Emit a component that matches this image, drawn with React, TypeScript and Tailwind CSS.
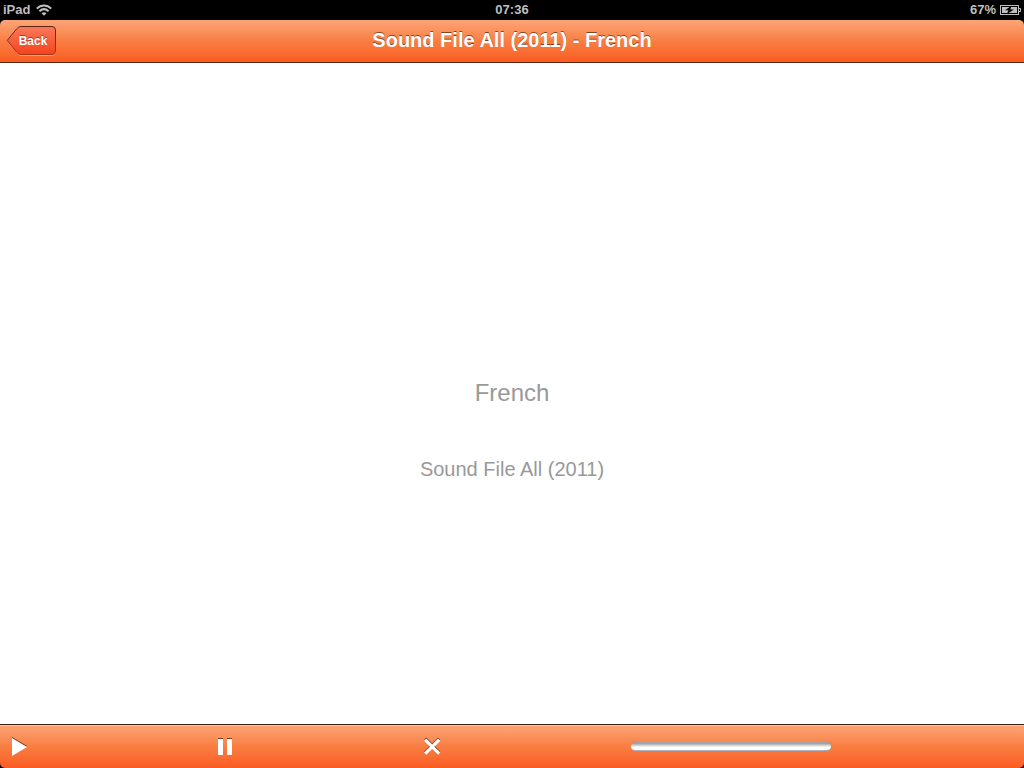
import type { ReactNode } from 'react';

const WifiIcon = () => (
  <svg width="16" height="12" viewBox="0 0 16 12" fill="none" stroke="#bfbfbf" aria-hidden="true">
    <path d="M0.8 4.6C5 0.4 11 0.4 15.2 4.6" strokeWidth="2" />
    <path d="M3.4 7.3C6.2 4.7 9.8 4.7 12.6 7.3" strokeWidth="2" />
    <path d="M8 11.8L5.5 9.2C7 8 9 8 10.5 9.2Z" fill="#bfbfbf" stroke="none" />
  </svg>
);

const BatteryIcon = () => (
  <svg width="21" height="10" viewBox="0 0 21 10" aria-hidden="true">
    <rect x="0.5" y="0.5" width="18" height="9" fill="none" stroke="#bfbfbf" />
    <path d="M19 3.5H20.5V6.5H19" fill="none" stroke="#bfbfbf" />
    <rect x="2" y="2" width="15" height="6" fill="#bfbfbf" />
    <path d="M11.4 0.8L5 5.3H8.4L6.8 9.2L14 4.5H10.4Z" fill="#000" />
  </svg>
);

const StatusBar = () => (
  <div className="grid h-5 grid-cols-3 items-center bg-black px-[3px] text-[13px] leading-5 font-bold text-[#bfbfbf]">
    <div className="flex items-center gap-x-[6px]">
      <span>iPad</span>
      <WifiIcon />
    </div>
    <span className="text-center">07:36</span>
    <div className="flex items-center justify-end gap-x-1">
      <span>67%</span>
      <BatteryIcon />
    </div>
  </div>
);

const BackButton = () => (
  <button type="button" className="relative h-[30px] w-[50px] cursor-pointer">
    <svg width="50" height="30" viewBox="0 0 50 30" className="absolute inset-0" aria-hidden="true">
      <defs>
        <linearGradient id="back-fill" x1="0" y1="0" x2="0" y2="1">
          <stop offset="0" stopColor="#f77a5c" />
          <stop offset="1" stopColor="#f6431c" />
        </linearGradient>
        <linearGradient id="back-edge" x1="0" y1="0" x2="0" y2="1">
          <stop offset="0" stopColor="#5a2618" />
          <stop offset="1" stopColor="#a5381a" />
        </linearGradient>
      </defs>
      <path
        d="M1.5 15.5L11 4Q12.8 1.5 15.5 1.5H46Q49.5 1.5 49.5 5V26Q49.5 29.5 46 29.5H15.5Q12.8 29.5 11 27Z"
        fill="none"
        stroke="#ffffff"
        strokeOpacity="0.3"
      />
      <path
        d="M1.2 14.5L10.5 3Q12.5 0.5 15 0.5H46Q49.5 0.5 49.5 4V25Q49.5 28.5 46 28.5H15Q12.5 28.5 10.5 26Z"
        fill="url(#back-fill)"
        stroke="url(#back-edge)"
      />
    </svg>
    <span className="relative block pl-1 text-center text-xs leading-[30px] font-bold text-white [text-shadow:0_-1px_0_rgba(0,0,0,0.4)]">
      Back
    </span>
  </button>
);

const NavBar = ({ title }: { title: string }) => (
  <header className="grid h-[43px] grid-cols-[1fr_auto_1fr] items-center rounded-t-[5px] border-b border-[#5a2410] bg-linear-to-b from-[#fba577] via-[#f97e42] to-[#fa5b20] px-[6px]">
    <BackButton />
    <h1 className="pb-[2px] text-xl leading-6 font-bold text-white [text-shadow:0_-1px_0_rgba(0,0,0,0.5)]">
      {title}
    </h1>
  </header>
);

const ToolButton = ({ label, children }: { label: string; children: ReactNode }) => (
  <button type="button" aria-label={label} className="flex h-8 w-4 cursor-pointer items-center">
    <svg width="18" height="20" viewBox="0 0 18 20" className="shrink-0 overflow-visible">
      <g fill="#7d3414" stroke="#7d3414" strokeWidth="0" transform="translate(0 -1)">
        {children}
      </g>
      <g fill="#fff" stroke="#fff" strokeWidth="0">
        {children}
      </g>
    </svg>
  </button>
);

const Toolbar = ({ progress }: { progress: number }) => (
  <footer className="flex h-11 items-center justify-between rounded-b-[5px] border-t border-[#3b1a0e] bg-linear-to-b from-[#fba577] via-[#f97e42] to-[#fa5b20] pr-[3px] pl-3 shadow-[inset_0_1px_0_#fdc3a3]">
    <ToolButton label="Play">
      <path d="M0 1L15 10L0 19Z" />
    </ToolButton>
    <ToolButton label="Pause">
      <path d="M0 2H5V18H0ZM9 2H14V18H9Z" />
    </ToolButton>
    <ToolButton label="Stop">
      <path d="M0.2 2.6L14.2 16.6M14.2 2.6L0.2 16.6" strokeWidth="3.2" />
    </ToolButton>
    <progress
      value={progress}
      max={1}
      aria-label="Playback position"
      className="h-[9px] w-[200px] appearance-none overflow-hidden rounded-full border-b border-[#a9b4c0] [&::-webkit-progress-bar]:bg-linear-to-b [&::-webkit-progress-bar]:from-[#a3a3a3] [&::-webkit-progress-bar]:from-20% [&::-webkit-progress-bar]:via-[#cfcfd1] [&::-webkit-progress-bar]:via-40% [&::-webkit-progress-bar]:to-white [&::-webkit-progress-bar]:to-65% [&::-webkit-progress-value]:bg-[#3f7fd8]"
    />
    <span />
  </footer>
);

const App = () => {
  const language = 'French';
  const recording = 'Sound File All (2011)';

  return (
    <div className="flex min-h-screen flex-col bg-black font-['Liberation_Sans',Arial,sans-serif]">
      <StatusBar />
      <NavBar title={`${recording} - ${language}`} />
      <main className="flex flex-1 flex-col items-center justify-center gap-y-12 bg-white pt-[74px] text-[#999999]">
        <p className="text-2xl leading-7">{language}</p>
        <p className="text-xl leading-7">{recording}</p>
      </main>
      <Toolbar progress={0} />
    </div>
  );
};

export default App;
